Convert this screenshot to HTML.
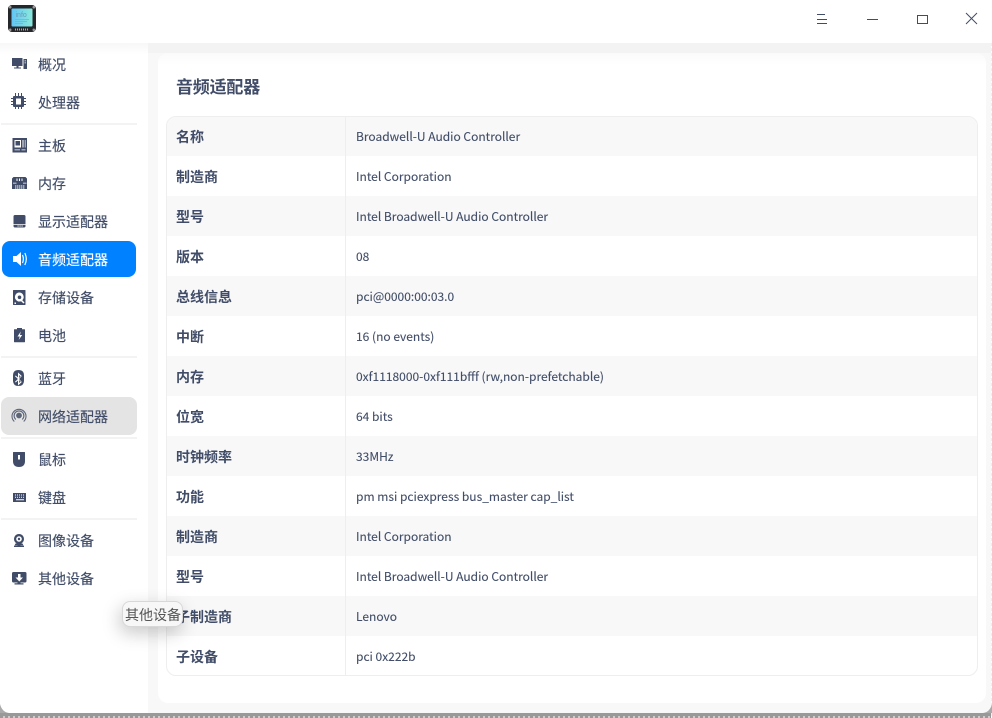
<!DOCTYPE html>
<html><head><meta charset="utf-8"><style>
*{box-sizing:border-box;margin:0;padding:0}
html,body{width:992px;height:718px;overflow:hidden;background:#fff}
body{position:relative;font-family:"Noto Sans CJK SC","Liberation Sans",sans-serif;color:#414d68}
.a{position:absolute}
.n{position:absolute;left:38px;font-size:14px;line-height:20px;height:20px;white-space:nowrap;color:#414d68;-webkit-text-stroke:.15px currentColor}
.d{position:absolute;left:1px;width:136px;height:2px;background:#f3f3f3}
.r{position:absolute;left:1px;width:810px;height:40px}
.r.g{background:#f8f8f8}
.l{position:absolute;left:9px;top:11px;font-size:14px;line-height:20px;font-weight:700;color:#414d68;white-space:nowrap}
.v{position:absolute;left:189px;top:11px;font-size:12px;line-height:20px;color:#414d68;white-space:nowrap;-webkit-text-stroke:.1px currentColor}
</style></head><body>
<div class="a" style="left:0;top:43px;width:992px;height:670px;background:#f8f8f8"></div>
<div class="a" style="left:0;top:43px;width:148px;height:670px;background:linear-gradient(#f7f7f7 0,#fff 12px)"></div>
<div class="a" style="left:148px;top:43px;width:843px;height:10px;background:#f3f3f3"></div>
<div class="a" style="left:158px;top:53px;width:828px;height:650px;background:linear-gradient(#fafafa 0,#fff 12px);border-radius:10px"></div>
<div class="a" style="left:0;top:713px;width:992px;height:5px;background:repeating-linear-gradient(90deg,#999 0 3px,#ccc 3px 5px)"></div>
<div class="a" style="left:0;top:713px;width:992px;height:3px;background:#999"></div>
<div class="a" style="left:991px;top:43px;width:1px;height:675px;background:repeating-linear-gradient(#eee 0 3px,#fff 3px 5px)"></div>
<svg class="a" style="left:0;top:704px" width="992" height="10"><path d="M0 0v9h9Q2 8 0 0z" fill="#aaa"/><path d="M992 0v9h-9q7-1 9-9z" fill="#aaa"/></svg>

<svg class="a" style="left:8px;top:5px" width="28" height="27" viewBox="0 0 28 27">
<defs><linearGradient id="s" x1="0" y1="0" x2="1" y2="0"><stop offset="0" stop-color="#62c4f5"/><stop offset="1" stop-color="#8aeadb"/></linearGradient></defs>
<rect x="0" y="0" width="28" height="27" rx="4" fill="#25272b"/>
<rect x="3.500" y="3.500" width="21" height="18" rx="1" fill="url(#s)"/>
<text x="7.500" y="12" font-size="7" font-family="Liberation Sans" fill="#6a98b5">info</text>
<path d="M7 14.500h14M7 16.500h12M7 18.500h8" stroke="#6fb4d8" stroke-width=".8"/>
<path d="M7 24.500h14" stroke="#e8a91f" stroke-width="2" stroke-dasharray="1 1"/>
<circle cx="2.200" cy="2.200" r="1.300" fill="#999"/><circle cx="25.800" cy="2.200" r="1.300" fill="#999"/><circle cx="2.200" cy="24.800" r="1.300" fill="#999"/><circle cx="25.800" cy="24.800" r="1.300" fill="#999"/>
</svg>

<svg class="a" style="left:816px;top:13px" width="12" height="12" fill="none" stroke="#414d68"><path d="M1 1.500h8M1 6.500h10M1 10.500h10"/></svg>
<svg class="a" style="left:866px;top:18px" width="13" height="3"><path d="M1 1.500h11" stroke="#414d68"/></svg>
<svg class="a" style="left:916px;top:14px" width="13" height="12" fill="none"><rect x="1.500" y="1.500" width="10" height="8" stroke="#414d68" stroke-width="1"/></svg>
<svg class="a" style="left:965px;top:12px" width="13" height="13" fill="none"><path d="M1 1l11 11M12 1L1 12" stroke="#414d68"/></svg>

<div class="a" style="left:2px;top:241px;width:134px;height:36px;border-radius:8px;background:#0081ff"></div>
<div class="a" style="left:1px;top:397px;width:136px;height:38px;border-radius:8px;background:#e4e4e4"></div>
<div class="d" style="top:123px"></div>
<div class="d" style="top:356px"></div>
<div class="d" style="top:437px"></div>
<div class="d" style="top:518px"></div>

<svg class="a" style="left:0;top:43px;overflow:visible" width="38" height="560" viewBox="0 43 38 560" fill="#414d68">
<!-- overview -->
<path d="M12 58h10.500v8h-4v1.500h2.500v1h-7v-1h2.500v-1.500h-4.500z"/><path fill-rule="evenodd" d="M23.500 59h3.500v10h-3.500zM24.500 60.500v.8h1.500v-.8zM24.500 62.500v.8h1.500v-.8z"/>
<!-- cpu -->
<path fill-rule="evenodd" d="M14 96h9q1 0 1 1v9q0 1-1 1h-9q-1 0-1-1v-9q0-1 1-1zM16 98.500v6h5v-6z"/>
<path d="M15 93h1v3h-1zM18 93h1v3h-1zM21 93h1v3h-1zM15 107h1v2h-1zM18 107h1v2h-1zM21 107h1v2h-1zM11 98h2v1h-2zM11 101h2v1h-2zM11 104h2v1h-2zM24 98h2v1h-2zM24 101h2v1h-2zM24 104h2v1h-2z"/>
<!-- board -->
<path fill-rule="evenodd" d="M12.500 138h14.500v14.500h-14.500zM14.500 140v7.500h6.500v-7.500zM22.500 140v7.500h1v-7.500zM24.800 140v7.500h.7v-7.500zM14.500 149.500v.8h5.500v-.8zM21.500 149.500v.8h4v-.8z"/><rect x="15.500" y="141" width="4.500" height="4.500"/>
<!-- memory -->
<path fill-rule="evenodd" d="M13.500 177h12l1.500 1.500v10.500h-15v-10.500zM16.500 178.500v2.500h1v-2.500zM19 178.500v2.500h1v-2.500zM21.500 178.500v2.500h1v-2.500zM13 182.700v.8h3.500v-.8zM23 182.700v.8h3.500v-.8zM15.500 185v4h.7v-4zM17.500 185v4h.7v-4zM19.500 185v4h.7v-4zM21.500 185v4h.7v-4zM23.500 185v4h.7v-4z"/>
<!-- display -->
<path fill-rule="evenodd" d="M15 215h9q1.500 0 1.500 1.500v7.500h-12v-7.500q0-1.500 1.500-1.500zM13.500 224.800h12v1.200q0 1.500-1.500 1.500h-9q-1.500 0-1.500-1.500zM17.500 225.500v1h1.200v-1zM19.500 225.500v1h1.200v-1zM21.500 225.500v1h1.200v-1z"/>
<!-- audio -->
<path fill="#fff" d="M13 256h3.500l4.500-4v14l-4.500-4h-3.500z"/><path d="M22.500 255q1.800 4 0 8M24.800 253q3 6 0 12" stroke="#fff" fill="none" stroke-width="1.200"/>
<!-- disk -->
<path fill-rule="evenodd" d="M13.500 290h11.500q.5 0 .5.500v14q0 .5-.5.500h-11.500q-.5 0-.5-.5v-14q0-.5.500-.5zM19.500 292.500a4.500 4.500 0 0 0-3.200 7.700a4.500 4.500 0 0 0 4.800 1l2.400 2.300l1-1l-2.200-2.300a4.500 4.500 0 0 0-2.800-7.700zM19.500 295.500a1.800 1.800 0 1 1 0 3.600a1.800 1.800 0 0 1 0-3.600zM14.500 302.500v1.500h1.500v-1.500z"/>
<!-- battery -->
<path fill-rule="evenodd" d="M17 328h5v1.200h2.500q.5 0 .5.500v12q0 .5-.5.500h-10q-.5 0-.5-.5v-12q0-.5.500-.5h2.500zM20.800 331.500l-3.300 5h2.200l-1 3.500l3.500-5h-2.200z"/>
<!-- bluetooth -->
<path fill-rule="evenodd" d="M18.500 370q5.500 0 5.500 5.500v5q0 5.500-5.500 5.500t-5.500-5.500v-5q0-5.500 5.500-5.500zM18 372.500v5l-2.300-2-.7.800l2.900 2.700-2.900 2.700.7.800 2.300-2v5l3.800-3.500-2.700-3 2.700-3zM19.200 375l1.500 1.500-1.500 1.500zM19.200 380l1.500 1.500-1.500 1.500z"/>
<!-- network -->
<g fill="none" stroke="#5c6478" stroke-width="1.100"><path d="M14.300 421.500a7 7 0 1 1 9.400 0"/><path d="M15.800 419.500a4.900 4.900 0 1 1 6.400 0"/></g><circle cx="19" cy="415.500" r="2.900" fill="#5c6478"/>
<!-- mouse -->
<path fill-rule="evenodd" d="M14 452h10.500q.5 0 .5.500v8.500q0 6-6 6t-6-6v-8.500q0-.5.500-.5zM18 455v4.500h2v-4.500z"/>
<!-- keyboard -->
<path fill-rule="evenodd" d="M13 493h13v9h-13zM15 494.500v1h1v-1zM17 494.500v1h1v-1zM19 494.500v1h1v-1zM21 494.500v1h1v-1zM23 494.500v1h1v-1zM15 496.800v1h1v-1zM17 496.800v1h1v-1zM19 496.800v1h1v-1zM21 496.800v1h1v-1zM23 496.800v1h1v-1zM16 499.300v1h8v-1z"/>
<!-- camera -->
<path fill-rule="evenodd" d="M19 534a5 5 0 1 1-.01 0zM19 536.200a2.800 2.800 0 1 0 .01 0zM19 537.800a1.200 1.200 0 1 1-.01 0z"/><path d="M15.500 543.500h7l1 2h-3v.2h-3v-.2h-3zM14 545.700h10v1.300h-10z"/>
<!-- other -->
<path fill-rule="evenodd" d="M13.500 572h11.500q1.500 0 1.500 1.500v7.500q0 1.500-1.500 1.500h-4.500v.7h3v1.300h-9v-1.300h3v-.7h-4q-1.500 0-1.500-1.500v-7.500q0-1.500 1.500-1.500zM18 574v3.500h-2.500l3.800 4 3.700-4h-2.500v-3.500z"/>
</svg>

<div class="n" style="top:55px">概况</div>
<div class="n" style="top:93px">处理器</div>
<div class="n" style="top:136px">主板</div>
<div class="n" style="top:174px">内存</div>
<div class="n" style="top:212px">显示适配器</div>
<div class="n" style="top:250px;color:#fff">音频适配器</div>
<div class="n" style="top:288px">存储设备</div>
<div class="n" style="top:326px">电池</div>
<div class="n" style="top:369px">蓝牙</div>
<div class="n" style="top:407px">网络适配器</div>
<div class="n" style="top:450px">鼠标</div>
<div class="n" style="top:488px">键盘</div>
<div class="n" style="top:531px">图像设备</div>
<div class="n" style="top:569px">其他设备</div>

<div class="a" style="left:176px;top:74px;font-size:17px;line-height:24px;font-weight:700;color:#414d68;white-space:nowrap;letter-spacing:-.2px">音频适配器</div>

<div class="a" style="left:166px;top:116px;width:812px;height:560px;border:1px solid #eeeeee;border-radius:10px;overflow:hidden;background:#fff">
<div class="r g" style="top:-1px;left:0"><div class="l">名称</div><div class="v">Broadwell-U Audio Controller</div></div>
<div class="r" style="top:39px;left:0"><div class="l">制造商</div><div class="v">Intel Corporation</div></div>
<div class="r g" style="top:79px;left:0"><div class="l">型号</div><div class="v">Intel Broadwell-U Audio Controller</div></div>
<div class="r" style="top:119px;left:0"><div class="l">版本</div><div class="v">08</div></div>
<div class="r g" style="top:159px;left:0"><div class="l">总线信息</div><div class="v">pci@0000:00:03.0</div></div>
<div class="r" style="top:199px;left:0"><div class="l">中断</div><div class="v">16 (no events)</div></div>
<div class="r g" style="top:239px;left:0"><div class="l">内存</div><div class="v">0xf1118000-0xf111bfff (rw,non-prefetchable)</div></div>
<div class="r" style="top:279px;left:0"><div class="l">位宽</div><div class="v">64 bits</div></div>
<div class="r g" style="top:319px;left:0"><div class="l">时钟频率</div><div class="v">33MHz</div></div>
<div class="r" style="top:359px;left:0"><div class="l">功能</div><div class="v">pm msi pciexpress bus_master cap_list</div></div>
<div class="r g" style="top:399px;left:0"><div class="l">制造商</div><div class="v">Intel Corporation</div></div>
<div class="r" style="top:439px;left:0"><div class="l">型号</div><div class="v">Intel Broadwell-U Audio Controller</div></div>
<div class="r g" style="top:479px;left:0"><div class="l">子制造商</div><div class="v">Lenovo</div></div>
<div class="r" style="top:519px;left:0"><div class="l">子设备</div><div class="v">pci 0x222b</div></div>
<div class="a" style="left:178px;top:0;width:1px;height:560px;background:#eeeeee"></div>
</div>

<div class="a" style="left:122px;top:601px;width:61px;height:26px;border-radius:8px;background:#f7f7f7;border:1px solid #d8d8d8;box-shadow:-2px 6px 18px rgba(0,0,0,.22);font-size:14px;line-height:26px;padding-left:2px;color:#555;white-space:nowrap">其他设备</div>
</body></html>
